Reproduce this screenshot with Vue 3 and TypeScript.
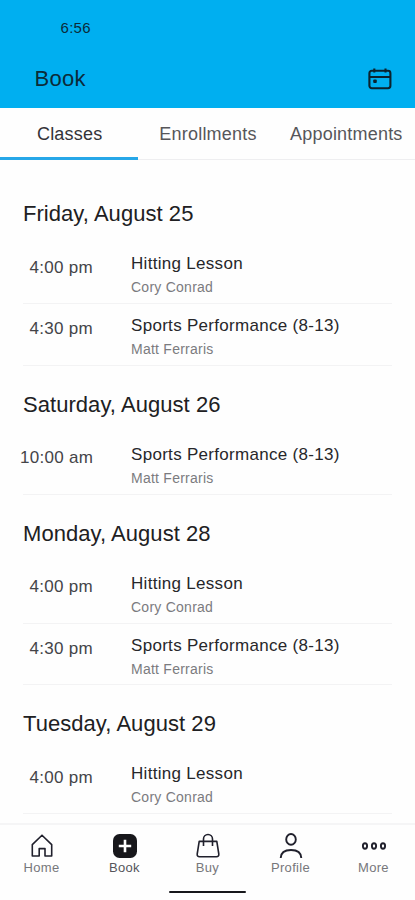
<script setup lang="ts">
interface Session {
  time: string
  title: string
  coach: string
}
interface Day {
  date: string
  sessions: Session[]
}

const tabs: string[] = ['Classes', 'Enrollments', 'Appointments']
const hitting = { title: 'Hitting Lesson', coach: 'Cory Conrad' }
const performance = { title: 'Sports Performance (8-13)', coach: 'Matt Ferraris' }

const days: Day[] = [
  { date: 'Friday, August 25', sessions: [{ time: '4:00 pm', ...hitting }, { time: '4:30 pm', ...performance }] },
  { date: 'Saturday, August 26', sessions: [{ time: '10:00 am', ...performance }] },
  { date: 'Monday, August 28', sessions: [{ time: '4:00 pm', ...hitting }, { time: '4:30 pm', ...performance }] },
  { date: 'Tuesday, August 29', sessions: [{ time: '4:00 pm', ...hitting }] },
]
const nav: string[] = ['Home', 'Book', 'Buy', 'Profile', 'More']
</script>

<template>
  <div class="screen">
    <header class="header">
      <div class="clock">6:56</div>
      <div class="bar">
        <h1>Book</h1>
        <svg class="calendar" width="24" height="22" viewBox="0 0 24 22" fill="none" stroke="#0b222d" stroke-width="2.1">
          <rect x="1.4" y="2.8" width="21" height="17.4" rx="2.4" />
          <path d="M1.4 9H22.4M6.3 .6V4.5M17.5 .6V4.5" />
          <rect x="5.2" y="11.4" width="3.6" height="3.6" rx="1" fill="#0b222d" stroke="none" />
        </svg>
      </div>
    </header>

    <nav class="tabs">
      <div v-for="(tab, i) in tabs" :key="tab" class="tab" :class="{ active: i === 0 }"><span>{{ tab }}</span></div>
    </nav>

    <main class="schedule">
      <section v-for="day in days" :key="day.date">
        <h2>{{ day.date }}</h2>
        <div v-for="s in day.sessions" :key="s.time" class="row">
          <div class="time">{{ s.time }}</div>
          <div class="info">
            <div class="title">{{ s.title }}</div>
            <div class="coach">{{ s.coach }}</div>
          </div>
        </div>
      </section>
    </main>

    <footer class="footer">
      <div class="items">
        <div v-for="item in nav" :key="item" class="item">
          <svg width="28" height="28" viewBox="0 0 28 28" fill="none" stroke="#20202c" stroke-width="1.6" stroke-linejoin="round">
            <path v-if="item === 'Home'" d="M4.3 12.6L14 3.2L23.7 12.6V24H17V16.6H11.2V24H4.3Z" />
            <template v-else-if="item === 'Book'">
              <rect x="2" y="2" width="24" height="24" rx="6.5" fill="#17171b" stroke="none" />
              <path d="M14 7.8V20.2M7.8 14H20.2" stroke="#fff" stroke-width="2.6" />
            </template>
            <template v-else-if="item === 'Buy'">
              <path d="M5.2 9.4H22.8L24.8 22Q25.1 24.8 22.4 24.8H5.6Q2.9 24.8 3.2 22Z" />
              <path d="M9.5 14V7A4.5 4.5 0 0 1 18.5 7V14" />
            </template>
            <template v-else-if="item === 'Profile'">
              <ellipse cx="14" cy="7.4" rx="4.8" ry="5.4" stroke-width="1.9" />
              <path d="M3.7 26C3.9 20.6 7.4 18 14 18S24.1 20.6 24.3 26" stroke-width="1.9" />
            </template>
            <g v-else stroke-width="1.9">
              <ellipse cx="5" cy="14" rx="2.1" ry="2.7" />
              <ellipse cx="14" cy="14" rx="2.1" ry="2.7" />
              <ellipse cx="23" cy="14" rx="2.1" ry="2.7" />
            </g>
          </svg>
          <span :class="{ current: item === 'Book' }">{{ item }}</span>
        </div>
      </div>
      <div class="indicator"></div>
    </footer>
  </div>
</template>

<style>
body {
  background: #fefefe;
}
</style>

<style scoped>
.screen {
  display: flex;
  flex-direction: column;
  height: 900px;
  overflow: hidden;
  background: #fefefe;
  color: #27272a;
  font-family: "Liberation Sans", Arial, sans-serif;
  letter-spacing: 0.3px;
}
.header {
  flex: none;
  height: 108px;
  box-sizing: border-box;
  padding-top: 18px;
  background: #00aff0;
  color: #0b2b39;
}
.clock {
  padding-left: 60.5px;
  font-size: 15px;
  line-height: 20px;
}
.bar {
  display: flex;
  align-items: center;
  justify-content: space-between;
  height: 32px;
  margin-top: 25px;
  padding: 0 23px 0 34.5px;
}
h1 {
  margin: 0;
  font-size: 22px;
  line-height: 32px;
  font-weight: 400;
}
.tabs {
  flex: none;
  display: grid;
  grid-template-columns: repeat(3, 1fr);
  height: 52px;
}
.tab {
  display: flex;
  justify-content: center;
  box-sizing: border-box;
  padding: 16px 0 0 1px;
  border-bottom: 1px solid #eeeef0;
  font-size: 18px;
  line-height: 20px;
  letter-spacing: 0.2px;
  color: #56565a;
  white-space: nowrap;
}
.tab.active {
  border-bottom: 3px solid #26a7e8;
  color: #333338;
}
.schedule {
  flex: 1;
  min-height: 0;
  overflow: hidden;
  padding: 15px 23px 0;
}
h2 {
  margin: 0;
  height: 67px;
  box-sizing: border-box;
  padding-top: 26px;
  font-size: 22px;
  line-height: 26px;
  font-weight: 400;
  letter-spacing: 0.05px;
  color: #202022;
}
.row {
  display: flex;
  height: 61.9px;
  box-sizing: border-box;
  border-bottom: 1px solid #f3f3f4;
}
.time {
  flex: none;
  width: 73px;
  margin-left: -3px;
  margin-right: 38px;
  padding-top: 15.5px;
  text-align: right;
  font-size: 17px;
  line-height: 20px;
  color: #444448;
  white-space: nowrap;
}
.info {
  padding-top: 12px;
}
.title {
  font-size: 17px;
  line-height: 20px;
}
.coach {
  margin-top: 4px;
  font-size: 14px;
  line-height: 18px;
  letter-spacing: 0.25px;
  color: #7b7b7f;
}
.footer {
  flex: none;
  height: 77px;
  box-sizing: border-box;
  border-top: 2px solid #f5f5f6;
}
.items {
  display: grid;
  grid-template-columns: repeat(5, 1fr);
  height: 66px;
  padding-top: 7px;
  box-sizing: border-box;
}
.item {
  display: flex;
  flex-direction: column;
  align-items: center;
  font-size: 13px;
  line-height: 16px;
  color: #77777b;
}
.item .current {
  color: #55555a;
}
.indicator {
  width: 77px;
  height: 2px;
  margin: 0 auto;
  border-radius: 1px;
  background: #17171b;
}
</style>
